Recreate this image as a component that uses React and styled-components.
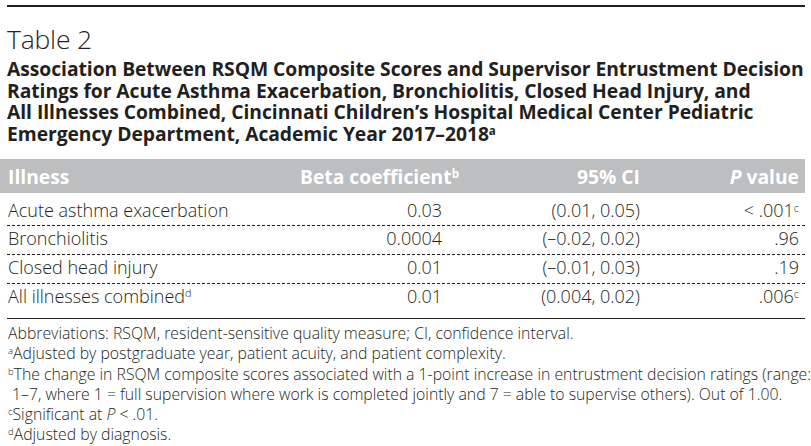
import React from 'react'
import styled, { createGlobalStyle } from 'styled-components'

const GlobalStyle = createGlobalStyle`
 body {
  margin: 0;
  background: #fff;
  color: #231f20;
  font-family: 'Open Sans', 'Liberation Sans', sans-serif;
 }
`

const Page = styled.div`
 width: 811px;
 height: 446px;
 overflow: hidden;
 padding-top: 5px;
 box-sizing: border-box;
`

const TopRule = styled.hr`
 margin: 0 6px 0 7px;
 height: 2px;
 border: none;
 background: #231f20;
`

const Heading = styled.div`
 padding: 0 6px 0 7px;
`

const TableNo = styled.h1`
 margin: 16px 0 0;
 font-size: 26.5px;
 line-height: 32px;
 font-weight: 300;
 letter-spacing: -0.2px;
`

const Caption = styled.h2`
 margin: 3px 0 0;
 font-size: 19.3px;
 line-height: 21.5px;
 font-weight: 700;
 letter-spacing: -0.05px;
 white-space: nowrap;
`

const Sup = styled.sup`
 font-size: 0.6em;
 line-height: 0;
 vertical-align: ${(p) => (p.$low ? '0.45em' : '0.55em')};
 font-weight: inherit;
`

const Grid = styled.div`
 display: grid;
 grid-template-columns: 292px 142px 198px 159px;
 padding: 0 6px 0 8px;
 width: 805px;
 box-sizing: border-box;
`

const HeadRow = styled(Grid)`
 margin-top: 15px;
 height: 34px;
 align-items: center;
 background: #bcbec0;
 color: #fff;
 font-size: 19.3px;
 font-weight: 700;
`

const Body = styled.div`
 margin: 0 6px 0 7px;
 padding: 4.8px 0 5.4px;
 border-bottom: 1.5px solid #231f20;
`

const Row = styled(Grid)`
 width: 798px;
 padding-left: 1px;
 height: 28.7px;
 align-items: start;
 font-size: 18px;
 font-weight: 300;
 border-bottom: 1px dashed #231f20;
 &:last-child {
  border-bottom-color: transparent;
 }
`

const Cell = styled.div`
 text-align: ${(p) => (p.$right ? 'right' : 'left')};
 white-space: nowrap;
`

const Notes = styled.div`
 padding: 4px 6px 0 8px;
 font-size: 15.8px;
 line-height: 20.3px;
 font-weight: 300;
 white-space: nowrap;
`

const Note = styled.div`
 padding-left: ${(p) => (p.$indent ? '4px' : '0')};
`

const rows = [
 { name: 'Acute asthma exacerbation', beta: '0.03', ci: '(0.01, 0.05)', p: '< .001', sup: 'c' },
 { name: 'Bronchiolitis', beta: '0.0004', ci: '(–0.02, 0.02)', p: '.96' },
 { name: 'Closed head injury', beta: '0.01', ci: '(–0.01, 0.03)', p: '.19' },
 { name: 'All illnesses combined', nameSup: 'd', beta: '0.01', ci: '(0.004, 0.02)', p: '.006', sup: 'c' },
]

const App = () => {
 return (
  <Page>
   <GlobalStyle />
   <TopRule />
   <Heading>
    <TableNo>Table 2</TableNo>
    <Caption>
     Association Between RSQM Composite Scores and Supervisor Entrustment Decision
     <br />
     Ratings for Acute Asthma Exacerbation, Bronchiolitis, Closed Head Injury, and
     <br />
     All Illnesses Combined, Cincinnati Children’s Hospital Medical Center Pediatric
     <br />
     Emergency Department, Academic Year 2017–2018<Sup>a</Sup>
    </Caption>
   </Heading>
   <HeadRow>
    <Cell>Illness</Cell>
    <Cell $right>
     Beta coefficient<Sup>b</Sup>
    </Cell>
    <Cell $right>95% CI</Cell>
    <Cell $right>
     <i>P</i> value
    </Cell>
   </HeadRow>
   <Body>
    {rows.map((r) => (
     <Row key={r.name}>
      <Cell>
       {r.name}
       {r.nameSup && <Sup>{r.nameSup}</Sup>}
      </Cell>
      <Cell $right>{r.beta}</Cell>
      <Cell $right>{r.ci}</Cell>
      <Cell $right>
       {r.p}
       {r.sup && <Sup $low>{r.sup}</Sup>}
      </Cell>
     </Row>
    ))}
   </Body>
   <Notes>
    <Note>Abbreviations: RSQM, resident-sensitive quality measure; CI, confidence interval.</Note>
    <Note>
     <Sup>a</Sup>Adjusted by postgraduate year, patient acuity, and patient complexity.
    </Note>
    <Note>
     <Sup>b</Sup>The change in RSQM composite scores associated with a 1-point increase in entrustment decision ratings (range:
    </Note>
    <Note $indent>
     1–7, where 1 = full supervision where work is completed jointly and 7 = able to supervise others). Out of 1.00.
    </Note>
    <Note>
     <Sup>c</Sup>Significant at <i>P</i> &lt; .01.
    </Note>
    <Note>
     <Sup>d</Sup>Adjusted by diagnosis.
    </Note>
   </Notes>
  </Page>
 )
}

export default App
